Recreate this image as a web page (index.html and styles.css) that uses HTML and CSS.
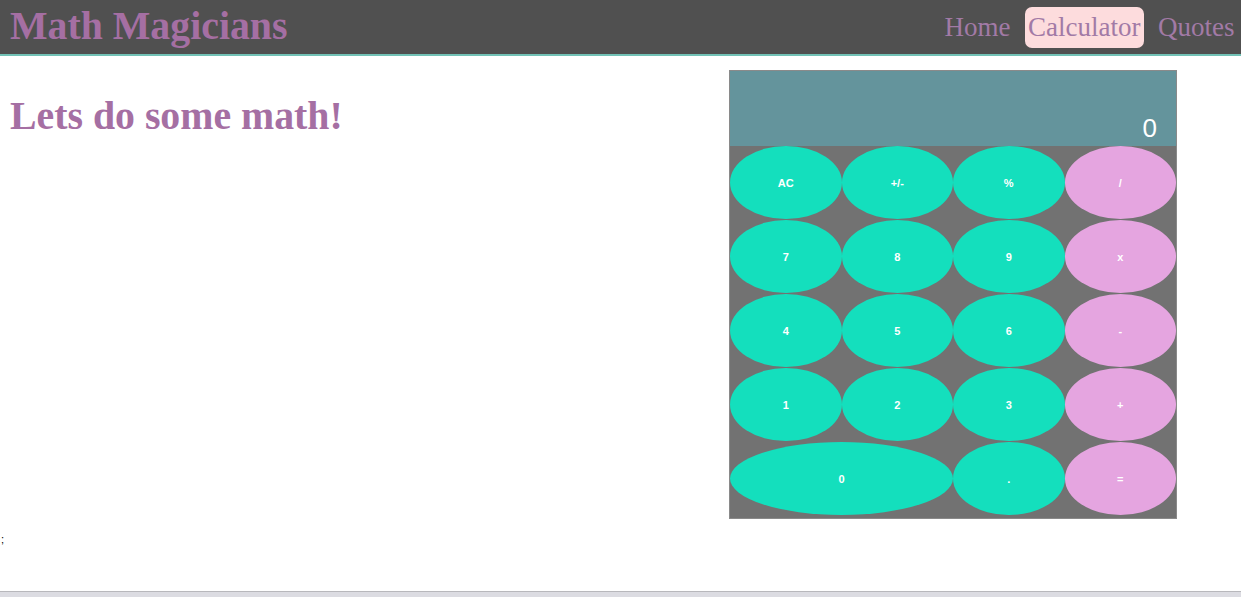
FILE: index.html
```html
<!DOCTYPE html>
<html lang="en">
<head>
<meta charset="utf-8">
<title>Math Magicians</title>
<link rel="stylesheet" href="styles.css">
</head>
<body>
<div class="page">
  <header class="header">
    <h1 class="brand">Math Magicians</h1>
    <nav class="nav">
      <a class="nav-link" href="#">Home</a>
      <a class="nav-link active" href="#">Calculator</a>
      <a class="nav-link" href="#">Quotes</a>
    </nav>
  </header>
  <main class="main">
    <h2 class="intro">Lets do some math!</h2>
    <div class="calc">
      <div class="display">0</div>
      <div class="keys">
        <button class="key">AC</button>
        <button class="key">+/-</button>
        <button class="key">%</button>
        <button class="key op">/</button>
        <button class="key">7</button>
        <button class="key">8</button>
        <button class="key">9</button>
        <button class="key op">x</button>
        <button class="key">4</button>
        <button class="key">5</button>
        <button class="key">6</button>
        <button class="key op">-</button>
        <button class="key">1</button>
        <button class="key">2</button>
        <button class="key">3</button>
        <button class="key op">+</button>
        <button class="key wide">0</button>
        <button class="key">.</button>
        <button class="key op">=</button>
      </div>
    </div>
  </main>
  <p class="stray">;</p>
  <div class="spacer"></div>
  <div class="bottom-bar"></div>
</div>
</body>
</html>
```
FILE: styles.css
```css
html, body {
  margin: 0;
  padding: 0;
  background: #ffffff;
}

.page {
  display: flex;
  flex-direction: column;
  height: 597px;
  font-family: "Liberation Serif", "Times New Roman", serif;
}

.header {
  display: flex;
  align-items: center;
  justify-content: space-between;
  height: 54px;
  background: #505050;
  border-bottom: 2px solid #72c2b6;
  padding: 0 3px 0 10px;
  flex-shrink: 0;
}

.brand {
  margin: 0;
  font-size: 39.8px;
  font-weight: bold;
  color: #a56fa3;
  line-height: 1;
}

.nav {
  display: flex;
  align-items: center;
  gap: 10.5px;
}

.nav-link {
  font-size: 27px;
  color: #a27aa6;
  text-decoration: none;
  padding: 4px 3.5px 5px;
  border-radius: 7px;
  line-height: 32px;
}

.nav-link.active {
  background: #fddcdd;
}

.main {
  display: flex;
  justify-content: space-between;
  align-items: flex-start;
  padding: 14px 64px 0 10px;
}

.intro {
  margin: 27px 0 0;
  font-size: 39.8px;
  font-weight: bold;
  color: #a56fa3;
  line-height: 1;
}

.calc {
  width: 446px;
  border: 1px solid #8a8a8a;
  background: #727272;
  padding-bottom: 2px;
}

.display {
  height: 75px;
  background: #64949c;
  color: #ffffff;
  font-family: "Liberation Sans", Arial, sans-serif;
  font-size: 26px;
  text-align: right;
  padding-right: 19px;
  box-sizing: border-box;
  display: flex;
  align-items: flex-end;
  justify-content: flex-end;
  padding-bottom: 2px;
}

.keys {
  display: grid;
  grid-template-columns: repeat(4, 1fr);
  grid-auto-rows: 74px;
}

.key {
  border: none;
  margin: 0;
  border-radius: 50%;
  height: 73px;
  background: #14dfbd;
  color: #ffffff;
  font-family: "Liberation Sans", Arial, sans-serif;
  font-size: 11px;
  font-weight: bold;
  padding: 0;
}

.key.op {
  background: #e5a5e0;
}

.key.wide {
  grid-column: span 2;
}

.stray {
  margin: 14px 0 0 1px;
  font-family: "Liberation Sans", Arial, sans-serif;
  font-size: 11px;
  color: #000;
}

.spacer {
  flex: 1;
}

.bottom-bar {
  height: 5px;
  border-top: 1px solid #b8b8bc;
  background: #dcdce2;
  flex-shrink: 0;
}
```
